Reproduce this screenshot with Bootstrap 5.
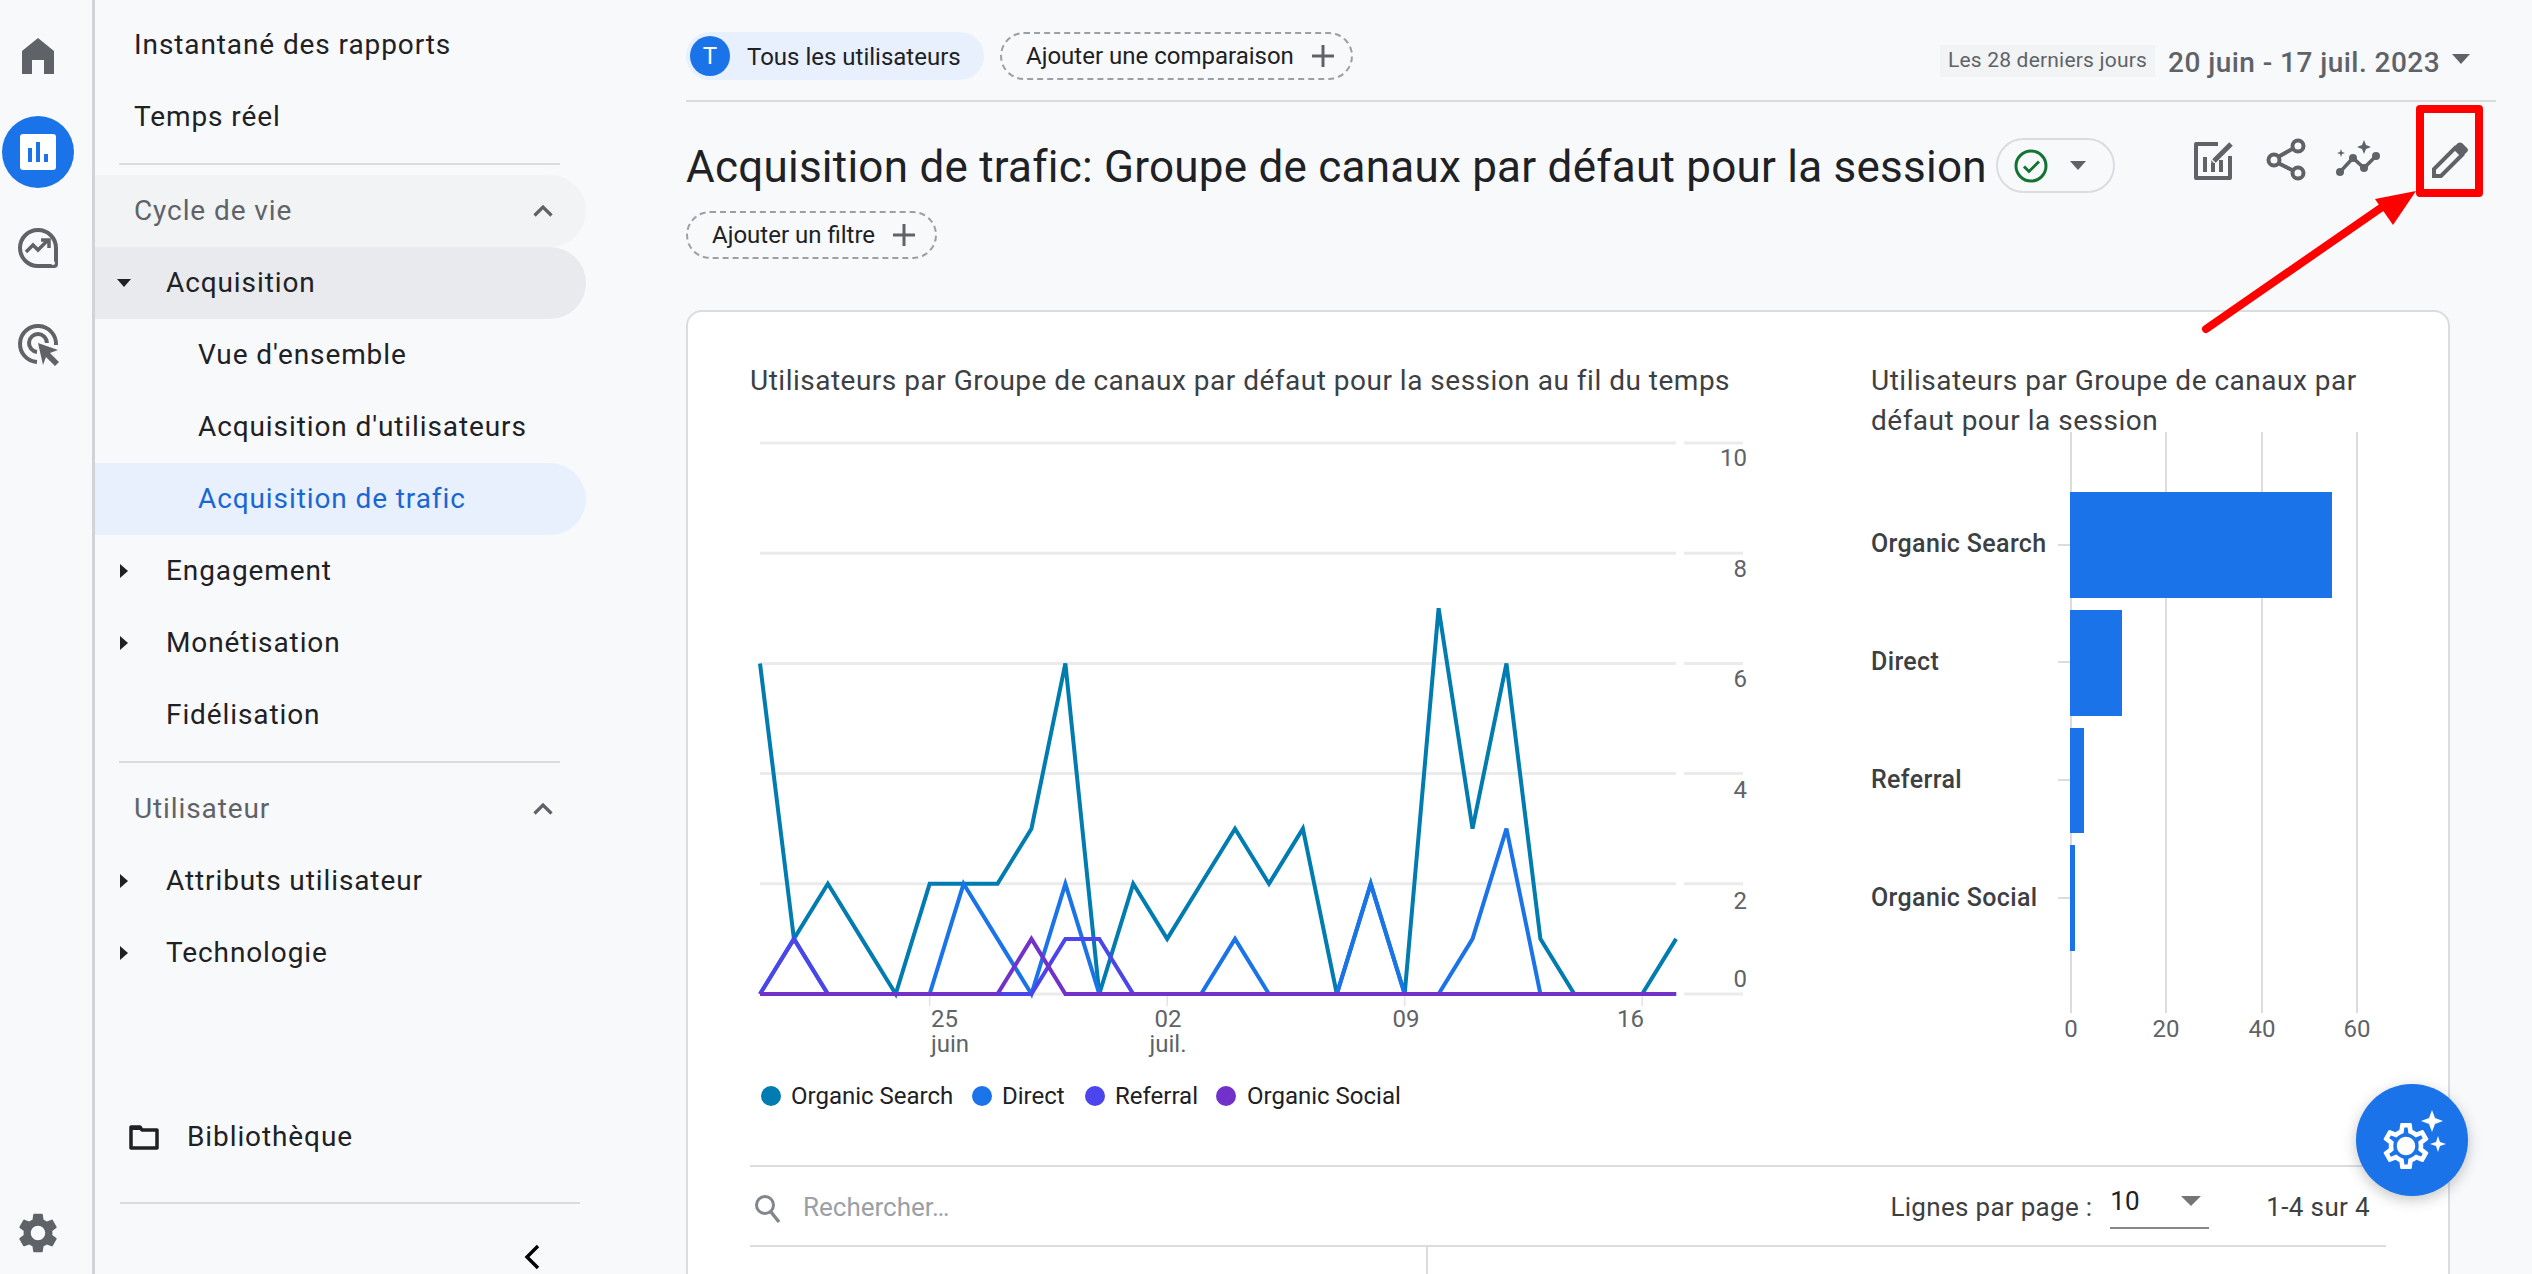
<!DOCTYPE html>
<html lang="fr">

<head>
    <meta charset="UTF-8">
    <title>Acquisition de trafic</title>
    <link href="https://cdn.jsdelivr.net/npm/bootstrap@5.3.0/dist/css/bootstrap.min.css" rel="stylesheet">
    <style>
        html, body { height: 100%; overflow: hidden; }
        body { background: #f8f9fb; color: #202124; font-family: Roboto, "Liberation Sans", sans-serif; font-size: 28px; }

        /* icon rail */
        .rail { width: 95px; flex-shrink: 0; padding-top: 8px; border-right: 3px solid #d2d3d6; }
        .rail svg { display: block; }
        .rail .ico { fill: #5f6368; }

        /* left menu */
        .side { width: 491px; flex-shrink: 0; padding-top: 9px; letter-spacing: .9px; }
        .side .nav-link { height: 72px; display: flex; align-items: center; color: #202124; padding: 0 0 0 39px; border-radius: 0 36px 36px 0; }
        .side .lvl1 { padding-left: 71px; }
        .side .lvl1.has-caret { padding-left: 22px; }
        .side .lvl1 svg { margin-right: 35px; }
        .side .lvl2 { padding-left: 103px; }
        .side .section { color: #5f6368; background: #f1f3f4; justify-content: space-between; padding-right: 33px; }
        .side .open { background: #e8eaed; }
        .side .nav-link.active { background: #e8f0fe; color: #1967d2; }
        .side hr { border: 0; height: 2px; background: #dadce0; opacity: 1; margin: 10px 26px 10px 24px; }
        .side-bottom { height: 173px; }
        .side-bottom .lib { height: 72px; padding-left: 34px; }
        .side-bottom hr { margin: 29px 6px 0 25px; }
        .side-bottom .collapse-btn { padding: 40px 0 0 428px; }

        /* main column */
        main { min-width: 0; padding: 0 36px 0 100px; overflow: hidden; }
        .topbar { height: 102px; padding: 32px 26px 0 0; border-bottom: 2px solid #dadce0; }
        .chip { height: 48px; font-size: 24px; white-space: nowrap; padding-top: 2px; }
        .chip-seg { background: #e8f0fe; width: 298px; padding-left: 4px; padding-top: 0; }
        .chip-seg .avatar { width: 40px; height: 40px; background: #1a73e8; color: #fff; margin-right: 17px; }
        .chip-seg .label { padding-top: 2px; }
        .chip-add { border: 2px dashed #9aa0a6; padding: 0 16px 0 24px; gap: 17px; }
        .range-tag { background: #f1f3f4; color: #5f6368; font-size: 21px; height: 32px; padding: 0 8px; margin-top: 13px; letter-spacing: .2px; }
        .range-date { color: #5f6368; font-size: 28px; font-weight: 500; margin: 13px 12px 0 13px; line-height: 36px; letter-spacing: .45px; }
        .range-caret { margin-top: 22px; }
        .title-row { padding: 36px 24px 0 0; }
        h1.report { font-size: 44px; font-weight: 400; line-height: 56px; margin: 1px 9px 0 0; white-space: nowrap; letter-spacing: .24px; }
        .status { width: 119px; height: 55px; border: 2px solid #dadce0; padding: 0 27px 0 16px; }
        .tools svg { display: block; }
        .chip-filter { margin-top: 16px; width: 251px; }

        /* report card */
        .report-card { margin: 51px 46px 0 0; min-height: 1100px; border: 2px solid #dadce0; border-radius: 16px; flex-shrink: 0; }
        .report-card .card-body { padding: 49px 62px 0 62px; }
        .chart-title { height: 69px; font-size: 28px; line-height: 40px; letter-spacing: .5px; color: #3c4043; margin: 0; font-weight: 400; }
        .chart-line { width: 1000px; }
        .chart-bars { width: 515px; }
        .chart-line svg, .chart-bars svg { display: block; overflow: visible; }
        svg text { font-family: Roboto, "Liberation Sans", sans-serif; font-size: 24px; fill: #5f6368; }
        svg .legend { fill: #202124; }
        svg .bar-label { fill: #3c4043; font-weight: 500; font-size: 25px; letter-spacing: .35px; }
        .table-bar { height: 82px; margin-top: 45px; border-top: 2px solid #dadce0; border-bottom: 2px solid #dadce0; padding: 2px 16px 0 0; font-size: 26px; color: #3c4043; }
        .search-hint { color: #9aa0a6; margin-left: 19px; }
        .rows-label { letter-spacing: .3px; }
        .rows-count { letter-spacing: .35px; }
        .rows-select { width: 99px; height: 44px; margin: 0 57px 0 18px; padding-bottom: 10px; padding-right: 8px; border-bottom: 2px solid #888; color: #202124; }
        .table-head { width: 678px; height: 60px; border-right: 2px solid #dadce0; }

        /* annotation and floating button */
        .mark-box { position: absolute; left: 2416px; top: 105px; width: 67px; height: 92px; border: 8px solid #f00; border-radius: 4px; }
        .mark-arrow { position: absolute; left: 2190px; top: 180px; pointer-events: none; }
        .fab { position: fixed; left: 2356px; top: 1084px; width: 112px; height: 112px; padding: 0; border: 0; background: #1a73e8; box-shadow: 0 4px 14px rgba(60, 64, 67, .3); }
    </style>
</head>

<body class="d-flex position-relative">

    <nav class="rail d-flex flex-column">
        <svg width="92" height="96" viewBox="0 8 92 96"><path class="ico" d="M38 38 54 51V74H44V60H32V74H22V51Z" /></svg>
        <svg width="92" height="96" viewBox="0 104 92 96">
            <circle cx="38" cy="152" r="36" fill="#1a73e8" />
            <rect x="20" y="134" width="36" height="36" rx="3" fill="#fff" />
            <path fill="#1a73e8" d="M28 148h4v14h-4zM36 142h4v20h-4zM44 154h4v8h-4z" />
        </svg>
        <svg width="92" height="96" viewBox="0 200 92 96">
            <path fill="none" stroke="#5f6368" stroke-width="4" d="M56 248c0-10-8-18-18-18s-18 8-18 18 8 18 18 18h16q2 0 2-2z" />
            <circle cx="53" cy="263" r="2" fill="#f8f9fb" />
            <path fill="none" stroke="#5f6368" stroke-width="3.5" d="M26 252l7-7 5 5 10-10M41 240h8v8" />
        </svg>
        <svg width="92" height="96" viewBox="0 296 92 96">
            <path fill="none" stroke="#5f6368" stroke-width="4" d="M37 362a18 18 0 1 1 19-17M37 352a9 9 0 1 1 10-9" />
            <path class="ico" d="M38 343 58 350 50 353 59 362 55 366 46 357 43 365Z" />
        </svg>
        <svg class="mt-auto" width="92" height="80" viewBox="0 1194 92 80">
            <g transform="translate(14 1209)"><path class="ico" transform="scale(2)" d="M19.14 12.94c.04-.3.06-.61.06-.94 0-.32-.02-.64-.07-.94l2.03-1.58c.18-.14.23-.41.12-.61l-1.92-3.32c-.12-.22-.37-.29-.59-.22l-2.39.96c-.5-.38-1.03-.7-1.62-.94l-.36-2.54c-.04-.24-.24-.41-.48-.41h-3.84c-.24 0-.43.17-.47.41l-.36 2.54c-.59.24-1.13.57-1.62.94l-2.39-.96c-.22-.08-.47 0-.59.22L2.74 8.87c-.12.21-.08.47.12.61l2.03 1.58c-.05.3-.09.63-.09.94s.02.64.07.94l-2.03 1.58c-.18.14-.23.41-.12.61l1.92 3.32c.12.22.37.29.59.22l2.39-.96c.5.38 1.03.7 1.62.94l.36 2.54c.05.24.24.41.48.41h3.84c.24 0 .44-.17.47-.41l.36-2.54c.59-.24 1.13-.56 1.62-.94l2.39.96c.22.08.47 0 .59-.22l1.92-3.32c.12-.22.07-.47-.12-.61l-2.01-1.58zM12 15.6c-1.98 0-3.6-1.62-3.6-3.6s1.62-3.6 3.6-3.6 3.6 1.62 3.6 3.6-1.62 3.6-3.6 3.6z" /></g>
        </svg>
    </nav>

    <aside class="side d-flex flex-column">
        <div class="nav flex-column">
            <a class="nav-link" href="#">Instantané des rapports</a>
            <a class="nav-link" href="#">Temps réel</a>
            <hr>
            <a class="nav-link section" href="#">Cycle de vie
                <svg width="20" height="12" viewBox="0 0 20 12"><path fill="none" stroke="#5f6368" stroke-width="3.2" d="M1.5 10.5 10 2l8.5 8.5" /></svg>
            </a>
            <a class="nav-link lvl1 has-caret open" href="#"><svg width="14" height="14" viewBox="0 0 14 14"><path fill="#202124" d="M0 3h14L7 11z" /></svg>Acquisition</a>
            <a class="nav-link lvl2" href="#">Vue d'ensemble</a>
            <a class="nav-link lvl2" href="#">Acquisition d'utilisateurs</a>
            <a class="nav-link lvl2 active" href="#">Acquisition de trafic</a>
            <a class="nav-link lvl1 has-caret" href="#"><svg width="14" height="14" viewBox="0 0 14 14"><path fill="#202124" d="M3 0l8 7-8 7z" /></svg>Engagement</a>
            <a class="nav-link lvl1 has-caret" href="#"><svg width="14" height="14" viewBox="0 0 14 14"><path fill="#202124" d="M3 0l8 7-8 7z" /></svg>Monétisation</a>
            <a class="nav-link lvl1" href="#">Fidélisation</a>
            <hr>
            <a class="nav-link section bg-transparent" href="#">Utilisateur
                <svg width="20" height="12" viewBox="0 0 20 12"><path fill="none" stroke="#5f6368" stroke-width="3.2" d="M1.5 10.5 10 2l8.5 8.5" /></svg>
            </a>
            <a class="nav-link lvl1 has-caret" href="#"><svg width="14" height="14" viewBox="0 0 14 14"><path fill="#202124" d="M3 0l8 7-8 7z" /></svg>Attributs utilisateur</a>
            <a class="nav-link lvl1 has-caret" href="#"><svg width="14" height="14" viewBox="0 0 14 14"><path fill="#202124" d="M3 0l8 7-8 7z" /></svg>Technologie</a>
        </div>
        <div class="side-bottom mt-auto">
            <div class="lib d-flex align-items-center">
                <svg class="me-4" width="30" height="26" viewBox="0 0 30 26"><path fill="none" stroke="#202124" stroke-width="3.5" stroke-linejoin="round" d="M2 3h9l2 3h15v18H2z" /><path fill="#202124" d="M2 2h10l2 4H2z" /></svg>
                <span class="ms-1">Bibliothèque</span>
            </div>
            <hr>
            <div class="collapse-btn">
                <svg class="d-block" width="18" height="26" viewBox="0 0 18 26"><path fill="none" stroke="#000" stroke-width="3.4" d="M15 2 4 13l11 11" /></svg>
            </div>
        </div>
    </aside>

    <main class="flex-grow-1 d-flex flex-column">
        <div class="topbar d-flex flex-shrink-0">
            <div class="chip chip-seg d-flex align-items-center rounded-pill">
                <span class="avatar d-flex align-items-center justify-content-center rounded-circle">T</span>
                <span class="label">Tous les utilisateurs</span>
            </div>
            <div class="chip chip-add d-flex align-items-center rounded-pill ms-3">
                Ajouter une comparaison
                <svg width="24" height="24" viewBox="0 0 24 24"><path fill="none" stroke="#5f6368" stroke-width="3" d="M12 1v22M1 12h22" /></svg>
            </div>
            <div class="range-tag d-flex align-items-center ms-auto">Les 28 derniers jours</div>
            <div class="range-date">20 juin - 17 juil. 2023</div>
            <svg class="range-caret" width="18" height="10" viewBox="0 0 18 10"><path fill="#5f6368" d="M0 0h18L9 10z" /></svg>
        </div>

        <div class="title-row d-flex align-items-start flex-shrink-0">
            <h1 class="report">Acquisition de trafic: Groupe de canaux par défaut pour la session</h1>
            <div class="status d-flex align-items-center justify-content-between rounded-pill">
                <svg width="34" height="34" viewBox="0 0 34 34"><circle cx="17" cy="17" r="15" fill="none" stroke="#137333" stroke-width="3" /><path fill="none" stroke="#137333" stroke-width="3" d="M10 17.5l5 5 10-10" /></svg>
                <svg width="16" height="9" viewBox="0 0 16 9"><path fill="#5f6368" d="M0 0h16L8 9z" /></svg>
            </div>
            <div class="tools d-flex ms-auto">
                <svg width="60" height="50" viewBox="2190 138 60 50">
                    <path fill="none" stroke="#5f6368" stroke-width="4" stroke-linejoin="round" d="M2218 144h-22v34h34v-22" />
                    <path fill="#5f6368" d="M2203 157h4v15h-4zM2211 163h4v9h-4zM2219 160h4v12h-4z" />
                    <path fill="none" stroke="#5f6368" stroke-width="5" d="M2214 161l17-17" />
                    <path fill="#5f6368" d="M2212 166l-1-6 4 4z" />
                </svg>
                <svg width="70" height="50" viewBox="2250 138 70 50">
                    <path fill="none" stroke="#5f6368" stroke-width="4" d="M2278 157l16-9M2278 163l16 8" />
                    <circle cx="2274" cy="160" r="5.5" fill="none" stroke="#5f6368" stroke-width="4" />
                    <circle cx="2298" cy="146" r="5.5" fill="none" stroke="#5f6368" stroke-width="4" />
                    <circle cx="2298" cy="173" r="5.5" fill="none" stroke="#5f6368" stroke-width="4" />
                </svg>
                <svg width="80" height="50" viewBox="2320 138 80 50">
                    <path fill="none" stroke="#5f6368" stroke-width="3.5" d="M2340 172l13-14 11 10 12-12" />
                    <g fill="#5f6368">
                        <circle cx="2340" cy="172" r="4" /><circle cx="2353" cy="158" r="4" /><circle cx="2364" cy="168" r="4" /><circle cx="2376" cy="156" r="4" />
                        <path d="M2364 140l2 5 5 2-5 2-2 5-2-5-5-2 5-2zM2341 149l1 3 3 1-3 1-1 3-1-3-3-1 3-1z" />
                    </g>
                </svg>
                <svg width="72" height="50" viewBox="2400 138 72 50">
                    <path fill="none" stroke="#5f6368" stroke-width="4" d="M2434 176v-7l21-21 7 7-21 21z" />
                    <path fill="#5f6368" d="M2454 147l4-4q2-1 4 0l5 5q2 2 0 4l-4 4z" />
                </svg>
            </div>
        </div>

        <div class="chip chip-add chip-filter d-flex align-items-center rounded-pill flex-shrink-0">
            Ajouter un filtre
            <svg width="24" height="24" viewBox="0 0 24 24"><path fill="none" stroke="#5f6368" stroke-width="3" d="M12 1v22M1 12h22" /></svg>
        </div>

        <div class="card report-card">
            <div class="card-body">
                <div class="d-flex justify-content-between">
                    <div class="chart-line">
                        <h2 class="chart-title">Utilisateurs par Groupe de canaux par défaut pour la session au fil du temps</h2>
                        <svg id="lineChart" width="1000" height="690" viewBox="750 430 1000 690"></svg>
                    </div>
                    <div class="chart-bars">
                        <h2 class="chart-title">Utilisateurs par Groupe de canaux par défaut pour la session</h2>
                        <svg width="515" height="690" viewBox="1871 430 515 690">
                            <g stroke="#dadce0" stroke-width="2">
                                <path d="M2071 432V1013M2166 432V1013M2262 432V1013M2357 432V1013" />
                                <path d="M2058 545H2070M2058 662H2070M2058 780H2070M2058 898H2070" />
                            </g>
                            <g fill="#1a73e8">
                                <rect x="2070" y="492" width="262" height="106" />
                                <rect x="2070" y="610" width="52" height="106" />
                                <rect x="2070" y="728" width="14" height="105" />
                                <rect x="2070" y="845" width="5" height="106" />
                            </g>
                            <text class="bar-label" x="1871" y="552">Organic Search</text>
                            <text class="bar-label" x="1871" y="670">Direct</text>
                            <text class="bar-label" x="1871" y="788">Referral</text>
                            <text class="bar-label" x="1871" y="906">Organic Social</text>
                            <g text-anchor="middle">
                                <text x="2071" y="1037">0</text><text x="2166" y="1037">20</text><text x="2262" y="1037">40</text><text x="2357" y="1037">60</text>
                            </g>
                        </svg>
                    </div>
                </div>
                <div class="table-bar d-flex align-items-center">
                    <svg width="34" height="34" viewBox="750 1190 34 34"><circle cx="765" cy="1205" r="8.5" fill="none" stroke="#80868b" stroke-width="3" /><path stroke="#80868b" stroke-width="3.4" d="M771 1212l8 10" /></svg>
                    <span class="search-hint">Rechercher…</span>
                    <span class="rows-label ms-auto">Lignes par page :</span>
                    <div class="rows-select d-flex align-items-center justify-content-between">10
                        <svg width="20" height="10" viewBox="0 0 20 10"><path fill="#757575" d="M0 0h20L10 10z" /></svg>
                    </div>
                    <span class="rows-count">1-4 sur 4</span>
                </div>
                <div class="table-head"></div>
            </div>
        </div>
    </main>

    <!-- annotation drawn over the page -->
    <div class="mark-box"></div>
    <svg class="mark-arrow" width="230" height="160" viewBox="2190 180 230 160">
        <path fill="none" stroke="#f00" stroke-width="8" stroke-linecap="round" d="M2206 329 2388 203" />
        <path fill="#f00" d="M2416 191 2375 199 2393 225z" />
    </svg>

    <button class="fab btn rounded-circle d-flex align-items-center justify-content-center" type="button" aria-label="Personnaliser">
        <svg width="112" height="112" viewBox="2356 1084 112 112">
            <g transform="translate(2378.4 1118.4) scale(2.3)">
                <path fill="#fff" d="M19.43 12.98c.04-.32.07-.64.07-.98 0-.34-.03-.66-.07-.98l2.11-1.65c.19-.15.24-.42.12-.64l-2-3.46c-.09-.16-.26-.25-.44-.25-.06 0-.12.01-.17.03l-2.49 1c-.52-.4-1.08-.73-1.69-.98l-.38-2.65C14.46 2.18 14.25 2 14 2h-4c-.25 0-.46.18-.49.42l-.38 2.65c-.61.25-1.17.59-1.69.98l-2.49-1c-.06-.02-.12-.03-.18-.03-.17 0-.34.09-.43.25l-2 3.46c-.13.22-.07.49.12.64l2.11 1.65c-.04.32-.07.65-.07.98 0 .33.03.66.07.98l-2.11 1.65c-.19.15-.24.42-.12.64l2 3.46c.09.16.26.25.44.25.06 0 .12-.01.17-.03l2.49-1c.52.4 1.08.73 1.69.98l.38 2.65c.03.24.24.42.49.42h4c.25 0 .46-.18.49-.42l.38-2.65c.61-.25 1.17-.59 1.69-.98l2.49 1c.06.02.12.03.18.03.17 0 .34-.09.43-.25l2-3.46c.12-.22.07-.49-.12-.64l-2.11-1.65zm-1.98-1.71c.04.31.05.52.05.73 0 .21-.02.43-.05.73l-.14 1.13.89.7 1.08.84-.7 1.21-1.27-.51-1.04-.42-.9.68c-.43.32-.84.56-1.25.73l-1.06.43-.16 1.13-.2 1.35h-1.4l-.19-1.35-.16-1.13-1.06-.43c-.43-.18-.83-.41-1.23-.71l-.91-.7-1.06.43-1.27.51-.7-1.21 1.08-.84.89-.7-.14-1.13c-.03-.31-.05-.54-.05-.74s.02-.43.05-.73l.14-1.13-.89-.7-1.08-.84.7-1.21 1.27.51 1.04.42.9-.68c.43-.32.84-.56 1.25-.73l1.06-.43.16-1.13.2-1.35h1.39l.19 1.35.16 1.13 1.06.43c.43.18.83.41 1.23.71l.91.7 1.06-.43 1.27-.51.7 1.21-1.07.85-.89.7.14 1.13zM12 8c-2.21 0-4 1.79-4 4s1.79 4 4 4 4-1.79 4-4-1.79-4-4-4z" />
            </g>
            <path fill="#fff" d="M2432 1110l3 8 8 3-8 3-3 8-3-8-8-3 8-3zM2438 1136l2 6 6 2-6 2-2 6-2-6-6-2 6-2z" />
        </svg>
    </button>

    <script src="https://cdn.jsdelivr.net/npm/bootstrap@5.3.0/dist/js/bootstrap.bundle.min.js"></script>
    <script>
        // line chart, one value per day over the 28 days
        const series = [
            { name: "Organic Search", color: "#007cb0", values: [6, 1, 2, 1, 0, 2, 2, 2, 3, 6, 0, 2, 1, 2, 3, 2, 3, 0, 2, 0, 7, 3, 6, 1, 0, 0, 0, 1] },
            { name: "Direct", color: "#1a73e8", values: [0, 1, 0, 0, 0, 0, 2, 1, 0, 2, 0, 0, 0, 0, 1, 0, 0, 0, 2, 0, 0, 1, 3, 0, 0, 0, 0, 0] },
            { name: "Referral", color: "#4b45eb", values: [0, 1, 0, 0, 0, 0, 0, 0, 0, 1, 1, 0, 0, 0, 0, 0, 0, 0, 0, 0, 0, 0, 0, 0, 0, 0, 0, 0] },
            { name: "Organic Social", color: "#7231c9", values: [0, 0, 0, 0, 0, 0, 0, 0, 1, 0, 0, 0, 0, 0, 0, 0, 0, 0, 0, 0, 0, 0, 0, 0, 0, 0, 0, 0] }
        ];

        const dayX = i => 760 + i * 33.93;
        const valueY = v => 994 - v * 55.1;
        let out = "";

        [10, 8, 6, 4, 2, 0].forEach(v => {
            const y = valueY(v);
            out += `<path stroke="#ebebeb" stroke-width="3" d="M760 ${y}H1676M1684 ${y}H1743"/>`;
        });
        const labelY = { 10: 466, 8: 577, 6: 687, 4: 798, 2: 909, 0: 987 };
        Object.keys(labelY).forEach(v => {
            out += `<text x="1747" y="${labelY[v]}" text-anchor="end">${v}</text>`;
        });

        [5, 12, 19, 26].forEach(i => {
            out += `<path stroke="#e3e3e3" stroke-width="1.5" d="M${dayX(i)} 996V1006"/>`;
        });
        [[931, "start", "25", "juin"], [1168, "middle", "02", "juil."], [1406, "middle", "09", ""], [1644, "end", "16", ""]].forEach(t => {
            out += `<text x="${t[0]}" y="1027" text-anchor="${t[1]}">${t[2]}</text>`;
            if (t[3]) out += `<text x="${t[0]}" y="1052" text-anchor="${t[1]}">${t[3]}</text>`;
        });

        series.forEach(s => {
            const pts = s.values.map((v, i) => dayX(i) + "," + valueY(v)).join(" ");
            out += `<polyline fill="none" stroke="${s.color}" stroke-width="4" points="${pts}"/>`;
        });

        const legendX = [[771, 791], [982, 1002], [1095, 1115], [1226, 1247]];
        series.forEach((s, i) => {
            out += `<circle cx="${legendX[i][0]}" cy="1096" r="10" fill="${s.color}"/>`;
            out += `<text class="legend" x="${legendX[i][1]}" y="1104">${s.name}</text>`;
        });

        document.getElementById("lineChart").innerHTML = out;
    </script>
</body>

</html>
